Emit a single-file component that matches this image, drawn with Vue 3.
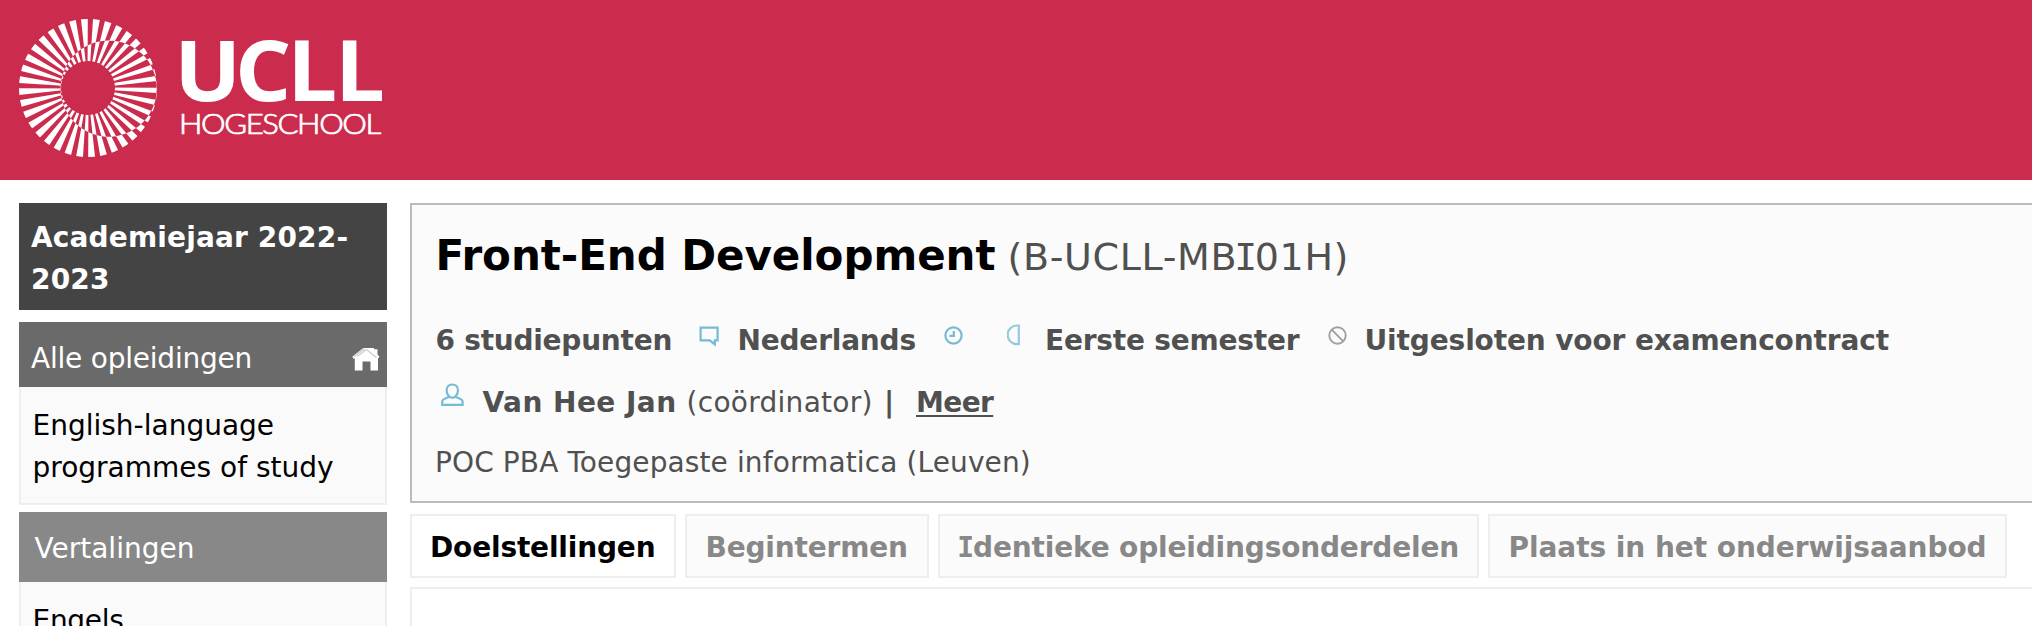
<script setup>
// Sunburst of the logo: 36 tapered rays around (69, 69)
const rays = Array.from({ length: 36 }, (_, k) => {
  const a = ((k * 10 + 7) * Math.PI) / 180
  const point = (r, offset) =>
    `${(69 + r * Math.cos(a) - offset * Math.sin(a)).toFixed(2)} ${(69 + r * Math.sin(a) + offset * Math.cos(a)).toFixed(2)}`
  return `M${point(9.5, 0)}L${point(75, 3.76)}L${point(75, -3.76)}Z`
}).join('')
const lens = 'M41.6 69.6a48.1 48.1 0 1 0 96.2 0a48.1 48.1 0 1 0 -96.2 0Z'
const burst = rays + lens
</script>

<template>
  <div class="page">
    <header class="banner">
      <svg class="burst" viewBox="0 0 138 138" width="138" height="138">
        <defs>
          <clipPath id="ring">
            <path clip-rule="evenodd" d="M0 69a69 69 0 1 0 138 0a69 69 0 1 0 -138 0ZM42 69a27 27 0 1 0 54 0a27 27 0 1 0 -54 0Z" />
          </clipPath>
        </defs>
        <path :d="burst" fill="#fff" fill-rule="evenodd" clip-path="url(#ring)" />
      </svg>
      <svg class="wordmark" viewBox="0 0 220 110" width="220" height="110">
        <text class="brand" transform="scale(1.06 1)" x="-6.4 51 100.2 145.4" y="66">UCLL</text>
        <text class="sub" transform="scale(1.15 1)" x="-1.7" y="99.2" textLength="175.8">HOGESCHOOL</text>
      </svg>
    </header>

    <div class="columns">
      <aside class="sidebar">
        <div class="year">Academiejaar 2022-2023</div>
        <div class="all">
          <span>Alle opleidingen</span>
          <svg class="house" viewBox="0 0 28 24" width="28" height="24">
            <path d="M0.5 9.5 10 2 11.5 1H22V2.2H25.5V7.5L27.5 9.8 26 11.4V23.5H18.5V14.5H10.5V23.5H2.8V11.4H1Z" fill="#fff" />
            <path d="M2 9.6 12.5 1.8M5 9.6 14.5 2.4M14.5 2.8 24.5 10.5" stroke="#ccc" stroke-width="1.2" fill="none" />
          </svg>
        </div>
        <div class="box programmes">English-language programmes of study</div>
        <div class="translations">Vertalingen</div>
        <div class="box languages">Engels</div>
      </aside>

      <main class="main">
        <section class="course">
          <h1><span class="name">Front-End Development</span><span class="code">(B-UCLL-MB<span class="slab">I</span>01H)</span></h1>
          <div class="meta">
            <span class="points">6 studiepunten</span>
            <svg class="i-speech" viewBox="0 0 21 21" width="21" height="21"><path d="M1.6 1.6H18.6V14.3H15.8V18.4L10.8 14.3H1.6Z" /></svg>
            <span>Nederlands</span>
            <svg class="i-clock" viewBox="0 0 20 20" width="20" height="20"><circle cx="9.5" cy="9.5" r="8.1" /><path d="M9.8 5V9.8H5.4" /></svg>
            <svg class="i-half" viewBox="0 0 14 22" width="14" height="22"><path d="M11.8 1.5V20.2H10A9.35 9.35 0 0 1 10 1.5Z" /></svg>
            <span>Eerste semester</span>
            <svg class="i-ban" viewBox="0 0 20 20" width="20" height="20"><circle cx="9.5" cy="9.5" r="8.2" /><path d="M3.7 3.7 15.3 15.3" /></svg>
            <span class="contract">Uitgesloten voor examencontract</span>
          </div>
          <div class="people">
            <svg class="i-user" viewBox="0 0 24 24" width="24" height="24"><path d="M8.2 13.6C6.3 11.8 5.6 9.6 5.6 7.4C5.6 3.8 8 1.5 11.3 1.5S17 3.8 17 7.4C17 9.6 16.3 11.8 14.4 13.6C17 15.6 21.6 15.5 21.6 18.5V21.9H1.2V18.5C1.2 15.5 5.6 15.6 8.2 13.6ZM8.2 13.6Q11.3 15.8 14.4 13.6" /></svg>
            <span class="who">Van Hee Jan</span>
            <span class="role">(coördinator)</span>
            <span>|</span>
            <a class="more">Meer</a>
          </div>
          <p class="poc">POC PBA Toegepaste informatica (Leuven)</p>
        </section>

        <nav class="tabs">
          <a class="tab active">Doelstellingen</a>
          <a class="tab">Begintermen</a>
          <a class="tab"><span class="slab">I</span>dentieke opleidingsonderdelen</a>
          <a class="tab">Plaats in het onderwijsaanbod</a>
        </nav>
        <section class="content"></section>
      </main>
    </div>
  </div>
</template>

<style>
html, body { margin: 0; overflow: hidden; background: #fff; }
</style>

<style scoped>
.page {
  width: 2032px; height: 626px; overflow: hidden; box-sizing: border-box;
  background: #fff; color: #505050;
  font: 28px/42px "DejaVu Sans", Verdana, sans-serif;
}
.page * { box-sizing: border-box; }
.banner { display: flex; height: 180px; padding: 19px 0 0 19px; background: #cb2c4d; }
.burst { flex: none; }
.wordmark { flex: none; margin: 16px 0 0 24px; overflow: visible; }
.brand { font: 700 83.5px "Open Sans", sans-serif; fill: #fff; }
.sub { font: 300 27px Lato, sans-serif; fill: #fff; stroke: #fff; stroke-width: 0.75; }

.columns { display: flex; gap: 23px; padding: 23px 0 0 19px; }
.sidebar { width: 368px; flex: none; }
.year { height: 107px; padding: 14px 12px 0; background: #444; color: #fff; font-weight: bold; letter-spacing: 0.15px; }
.all {
  display: flex; justify-content: space-between; height: 65px; margin-top: 12px;
  padding: 16px 7px 0 12px; background: #6a6a6a; color: #fff; letter-spacing: -0.22px;
}
.house { margin-top: 9px; }
.box { border: 2px solid #eee; border-top: 0; background: #fafafa; color: #000; }
.programmes { height: 118px; padding: 18px 20px 0 11.5px; }
.translations { height: 70px; margin-top: 7px; padding: 16px 0 0 15.5px; background: #888; color: #fff; }
.languages { height: 120px; padding: 18px 0 0 11.5px; letter-spacing: -0.3px; }

.main { flex: 1; min-width: 0; }
.course { height: 300px; padding: 26px 0 0 23.5px; border: 2px solid #bbb; border-right: 0; background: #fbfbfb; }
h1 { display: flex; align-items: baseline; margin: 0 0 39px; font-size: 42px; line-height: 50px; height: 50px; white-space: nowrap; }
.name { width: 572px; color: #000; letter-spacing: -0.05px; }
.code { font-size: 38px; font-weight: normal; letter-spacing: 0.65px; }
.slab { font-family: "DejaVu Sans Mono", monospace; }
.code .slab { margin: 0 -3px; }
.tab .slab { margin: 0 -0.8px; }
.meta {
  display: grid; grid-template-columns: 263px 39px 206px 63px 38.5px 282.5px 37px auto;
  height: 42px; margin-bottom: 20px; font-weight: bold; letter-spacing: -0.2px; white-space: nowrap;
}
.points { letter-spacing: -0.25px; }
.meta svg, .people svg { fill: none; stroke: #74bbd3; stroke-width: 2.2; margin-top: 6px; }
.people {
  display: grid; grid-template-columns: 42px 204px 197.5px 32px auto;
  height: 42px; padding-left: 5px; margin-bottom: 18px; font-weight: bold; white-space: nowrap;
}
.people .i-user { margin-top: 1px; }
.meta .i-half { stroke: #93cadd; margin-top: 4px; }
.meta .i-ban { stroke: #a0a0a0; stroke-width: 1.9; }
.contract { letter-spacing: -0.13px; }
.who { letter-spacing: 0.45px; }
.role { font-weight: normal; letter-spacing: 0.28px; }
.more { justify-self: start; letter-spacing: -0.6px; text-decoration: underline; text-decoration-thickness: 2px; text-underline-offset: 3px; text-decoration-skip-ink: none; }
.poc { margin: 0 0 0 -0.5px; letter-spacing: 0.11px; }

.tabs { display: flex; gap: 9px; margin-top: 11px; }
.tab {
  height: 64px; padding: 11px 0 0 18px; border: 2px solid #eee; background: #fbfbfb; color: #888;
  font-weight: bold; letter-spacing: -0.17px; white-space: nowrap;
}
.tab:nth-child(2) { width: 244px; padding-left: 18.5px; }
.tab:nth-child(3) { width: 541px; }
.tab:nth-child(4) { width: 519px; padding-left: 18.5px; letter-spacing: -0.06px; }
.tab.active { width: 266px; background: #fff; color: #000; }
.content { height: 80px; margin-top: 9px; border: 2px solid #eee; border-right: 0; background: #fff; }
</style>
